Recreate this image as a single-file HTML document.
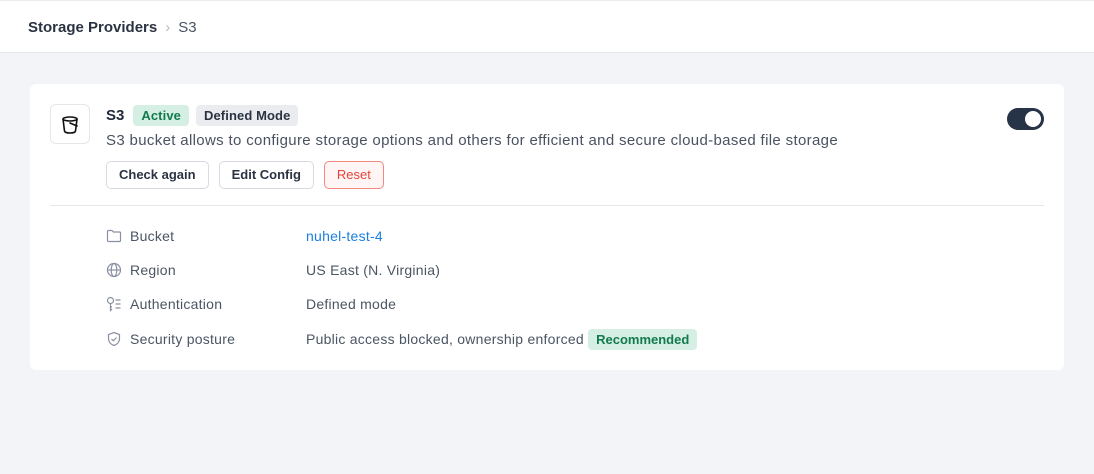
<!DOCTYPE html>
<html><head><meta charset="utf-8"><style>
*{box-sizing:border-box;margin:0;padding:0}
body{width:1094px;height:474px;background:#f3f4f8;font-family:"Liberation Sans",sans-serif;color:#1f2937;position:relative;overflow:hidden}
.hdr{position:absolute;left:0;top:0;width:1094px;height:53px;background:#fff;border-bottom:1px solid #e5e7eb;border-top:1px solid #ececf0}
.bc{position:absolute;left:28px;top:18px;font-size:15px;font-weight:bold;color:#2b3343}
.bc .sep{color:#b7bcc6;font-weight:normal;margin:0 8px 0 8px}
.bc .cur{color:#4b5563;font-weight:normal}
.card{position:absolute;left:30px;top:84px;width:1034px;height:286px;background:#fff;border-radius:6px}
.ico{position:absolute;left:20px;top:20px;width:40px;height:40px;border:1px solid #e5e7eb;border-radius:6px}
.ico svg{position:absolute;left:8px;top:8px}
.t{position:absolute;left:76px;top:21px;display:flex;align-items:center;gap:7px}
.t b{font-size:15px;color:#1f2937;margin-right:2px}
.bd{font-size:13px;padding:3px 8px;border-radius:4px;font-weight:bold;letter-spacing:0.1px}
.desc{position:absolute;left:76px;top:48px;font-size:15px;color:#4a5262;letter-spacing:0.34px}
.btns{position:absolute;left:76px;top:77px;display:flex;gap:10px}
.btn{height:28px;border:1px solid #d7dae0;border-radius:5px;font-size:13px;font-weight:bold;color:#2b3343;padding:0 12px;line-height:26px}
.hr{position:absolute;left:20px;right:20px;top:121px;border-top:1px solid #e5e7eb}
.row{position:absolute;left:76px;font-size:14px;color:#4b5563;height:20px;line-height:20px;letter-spacing:0.25px}
.row svg{position:absolute;left:0;top:2px}
.row .l{position:absolute;left:24px;white-space:nowrap}
.row .v{position:absolute;left:200px;white-space:nowrap}
.tog{position:absolute;left:977px;top:24px;width:37px;height:22px;background:#273447;border-radius:11px}
.tog i{position:absolute;right:3px;top:3px;width:16px;height:16px;border-radius:50%;background:#fff}
</style></head><body>
<div class="hdr"><div class="bc">Storage Providers<span class="sep">&#x203A;</span><span class="cur">S3</span></div></div>
<div class="card">
<div class="ico"><svg width="24" height="24" viewBox="0 0 24 24" fill="none" stroke="#111" stroke-width="1.6" stroke-linecap="round" stroke-linejoin="round"><ellipse cx="11" cy="6" rx="7" ry="2"/><path d="M4 6l1.5 12c.3 1.2 2.5 2 5.5 2s5.2-.8 5.5-2L18 6"/><path d="M11 10l7 3"/></svg></div>
<div class="t"><b>S3</b><span class="bd" style="background:#d5efe4;color:#137a4e">Active</span><span class="bd" style="background:#ebecf0;color:#2b3343">Defined Mode</span></div>
<div class="desc">S3 bucket allows to configure storage options and others for efficient and secure cloud-based file storage</div>
<div class="btns"><div class="btn">Check again</div><div class="btn">Edit Config</div><div class="btn" style="border-color:#f08a80;color:#e5443a;background:#fff5f4;font-weight:normal">Reset</div></div>
<div class="tog"><i></i></div>
<div class="hr"></div>
<div class="row" style="top:142px"><svg width="16" height="16" viewBox="0 0 16 16" fill="none" stroke="#8a90a0" stroke-width="1.2"><path d="M1.5 3.5a1 1 0 011-1h3.5l1.5 1.5h6a1 1 0 011 1v7.5a1 1 0 01-1 1h-11a1 1 0 01-1-1z"/></svg><span class="l">Bucket</span><span class="v" style="color:#1a7fe0">nuhel-test-4</span></div>
<div class="row" style="top:176px"><svg width="16" height="16" viewBox="0 0 16 16" fill="none" stroke="#8a90a0" stroke-width="1.2"><circle cx="8" cy="8" r="6.5"/><ellipse cx="8" cy="8" rx="2.8" ry="6.5"/><path d="M1.5 8h13"/></svg><span class="l">Region</span><span class="v">US East (N. Virginia)</span></div>
<div class="row" style="top:210px"><svg width="16" height="16" viewBox="0 0 16 16" fill="none" stroke="#8a90a0" stroke-width="1.2"><circle cx="4.5" cy="4.5" r="3"/><path d="M4.5 7.5v7l1.5-1.5M4.5 11h1.5M9.5 4h5M9.5 8h5M9.5 12h5"/></svg><span class="l">Authentication</span><span class="v">Defined mode</span></div>
<div class="row" style="top:245px"><svg width="16" height="16" viewBox="0 0 16 16" fill="none" stroke="#8a90a0" stroke-width="1.2"><path d="M8 1.5l5.5 2v4c0 3.5-2.5 6-5.5 7-3-1-5.5-3.5-5.5-7v-4z"/><path d="M5.5 8l1.8 1.8L10.5 6.5"/></svg><span class="l">Security posture</span><span class="v">Public access blocked, ownership enforced <span class="bd" style="background:#d5efe4;color:#137a4e;letter-spacing:0">Recommended</span></span></div>
</div>
</body></html>
